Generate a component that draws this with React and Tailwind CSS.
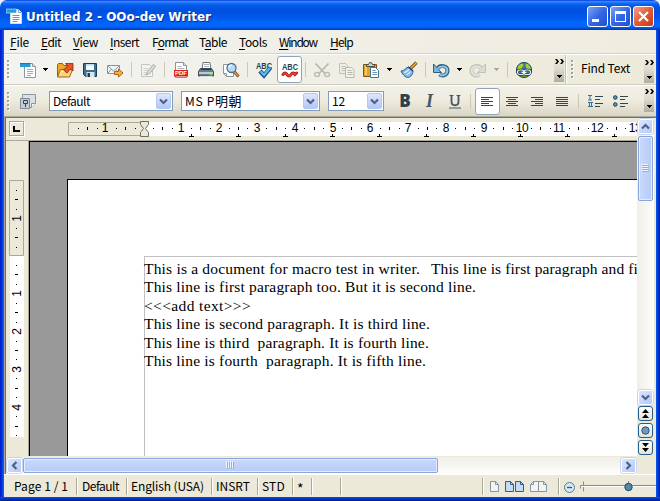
import React, { useLayoutEffect, useRef, useState } from "react";

const UI = "font-['Noto_Sans_CJK_JP','Noto_Sans',sans-serif] font-normal";

/* Text spread to an exact width by adjusting its letter spacing. */
function Fit({ w, className = "", children, text }) {
  const ref = useRef(null);
  const [gap, setGap] = useState(0);
  useLayoutEffect(() => {
    const natural = ref.current.getBoundingClientRect().width;
    setGap((w - natural) / text.length);
  }, []);
  return (
    <span ref={ref} className={`inline-block shrink-0 whitespace-pre ${className}`} style={{ letterSpacing: gap }}>
      {children || text}
    </span>
  );
}

const Icon = ({ children, w = 18, h = 18, className = "" }) => (
  <svg width={w} height={h} viewBox={`0 0 ${w} ${h}`} className={`shrink-0 ${className}`} fill="none">
    {children}
  </svg>
);

const Cell = ({ className, children }) => (
  <div className={`flex h-full shrink-0 items-center justify-center ${className}`}>{children}</div>
);

const Sep = ({ className = "" }) => <div className={`h-[15px] w-px shrink-0 bg-[#cbc8b8] ${className}`} />;

const Caret = ({ dim }) => (
  <Icon w={5} h={3} className="mt-[-1px]">
    <path d="M0 0h5v1H0zM1 1h3v1H1zM2 2h1v1H2z" fill={dim ? "#aaa79b" : "#000"} />
  </Icon>
);

const Grip = () => (
  <div className="flex h-full w-[11px] shrink-0 items-center pl-[3px]">
    <Icon w={3} h={19}>
      {[0, 4, 8, 12, 16].map((y) => (
        <g key={y}>
          <path d={`M1 ${y + 1}h2v2H1z`} fill="#fff" />
          <path d={`M0 ${y}h2v2H0z`} fill="#a5a396" />
        </g>
      ))}
    </Icon>
  </div>
);

const Overflow = () => (
  <div className="flex h-[26px] w-[10px] shrink-0 flex-col items-center justify-between bg-gradient-to-b from-[#efeddf] via-[#dedbcd] to-[#b0ada0] pt-[3px] pb-[4px]">
    <Icon w={9} h={5}>
      <path d="M0 0h2l2 2.500L2 5H0l2-2.500zM5 0h2l2 2.500L7 5H5l2-2.500z" fill="#000" />
    </Icon>
    <Icon w={5} h={3}>
      <path d="M0 0h5v1H0zM1 1h3v1H1zM2 2h1v1H2z" fill="#000" />
    </Icon>
  </div>
);

const DocIcon = () => (
  <Icon>
    <path d="M5.500 2.500h8l3 3v11h-11z" fill="#fff" stroke="#8c979f" />
    <path d="M13.500 2.500v3h3" stroke="#8c979f" fill="#dfe5e8" />
    <path d="M1 2h10.500v4H1z" fill="#2a9ad2" />
    <path d="M1 2h10.500v1H1z" fill="#1577ac" />
    <path d="M8 8.500h6M8 10.500h6M8 12.500h6M8 14.500h4" stroke="#a2abb1" />
  </Icon>
);

const OpenIcon = () => (
  <Icon>
    <path d="M1.500 15.500v-12l1-1h4l1.500 2h4v3" fill="#f1a92c" stroke="#9c5b10" />
    <path d="M1.500 16l3-7.500h12l-3 7.500z" fill="#fdd475" stroke="#a8620f" />
    <path d="M4 14l1.500-4h9" stroke="#fff0b8" />
    <path d="M7.500 9l4-4-2-2.500h7.500v7.500l-2.500-2-3.500 4z" fill="#e4572a" stroke="#8d2210" strokeWidth=".8" />
  </Icon>
);

const SaveIcon = () => (
  <Icon>
    <path d="M2.500 2.500h13v13h-11l-2-2z" fill="#3e6f8f" stroke="#173e58" />
    <path d="M5 3h8v6H5z" fill="#f8fbfc" />
    <path d="M5 3h8v1.500H5z" fill="#bdd9ea" />
    <path d="M5.500 11h8v5h-8z" fill="#d8e5ec" />
    <path d="M6.500 12h2.500v4H6.500z" fill="#1d4055" />
  </Icon>
);

const MailIcon = () => (
  <Icon>
    <path d="M1.500 4.500h12v8h-12z" fill="#f4f7fa" stroke="#8594a0" />
    <path d="M2 5l5.500 5L13 5M2 12l3.500-4M13 12l-3-3.500" stroke="#8594a0" />
    <path d="M8.500 10.500h4v-2.500l4.500 4-4.500 4v-2.500h-4z" fill="#fbb23c" stroke="#a3570d" strokeWidth=".9" />
  </Icon>
);

const EditIcon = () => (
  <Icon>
    <path d="M2.500 3.500h8l3 3v9h-11z" fill="#f2f2ef" stroke="#c4c5c1" />
    <path d="M4.500 7.500h5M4.500 9.500h4M4.500 11.500h3M4.500 13.500h3" stroke="#d0d1cd" />
    <path d="M7 14l1.500-3.500 6-7 2.200 1.800-6 7z" fill="#dcdcd8" stroke="#a9aaa6" />
  </Icon>
);

const PdfIcon = () => (
  <Icon>
    <path d="M3.500 1.500h8l3 3v12h-11z" fill="#fff" stroke="#87949d" />
    <path d="M11.500 1.500v3h3" fill="#dfe5e8" stroke="#87949d" />
    <path d="M5.500 5.500h4M5.500 7.500h7" stroke="#adb6bc" />
    <path d="M2 9h14v6.500H2z" fill="#d9211f" />
    <text x="3" y="14.300" textLength="12" lengthAdjust="spacingAndGlyphs" fontSize="6" fontWeight="700" fontFamily="Liberation Sans" fill="#fff">PDF</text>
  </Icon>
);

const PrintIcon = () => (
  <Icon>
    <path d="M5 8.500l1-7h7l1 7z" fill="#fff" stroke="#697984" />
    <path d="M7 3.500h5M7 5.500h5" stroke="#aab5bd" />
    <path d="M1.500 10.500l2-3h11l2 3v4.500h-15z" fill="#6b7d89" stroke="#3a4c57" />
    <path d="M2 11h14v2H2z" fill="#bfcbd2" />
    <path d="M4 8.500h10" stroke="#2c3b44" />
    <path d="M3 15.500h12" stroke="#d7dfe4" />
    <path d="M12.500 13h3v1.500h-3z" fill="#65d12c" />
  </Icon>
);

const PreviewIcon = () => (
  <Icon>
    <path d="M1.500 3.500h10v12h-7l-3-3z" fill="#fff" stroke="#8b969d" />
    <path d="M1.500 12.500h3v3" stroke="#8b969d" />
    <path d="M12 10.500l4.500 5" stroke="#7d4212" strokeWidth="3" />
    <path d="M12 10.500l4 4.500" stroke="#e8a04c" strokeWidth="1.300" />
    <circle cx="9.500" cy="7" r="4.500" fill="#b7daf1" stroke="#49708d" strokeWidth="1.300" />
    <path d="M7 6.500a2.800 2.800 0 0 1 3-2.300" stroke="#fff" strokeWidth="1.300" />
  </Icon>
);

const SpellIcon = ({ auto }) => (
  <Icon>
    <text x="1" y={auto ? 8.5 : 7.5} textLength="16" lengthAdjust="spacingAndGlyphs" fontSize="8.500" fontWeight="700" fontFamily="Liberation Sans" fill="#263f4e">ABC</text>
    {auto ? (
      <>
        <path d="M2 13.500q2-3 4 0t4 0 4 0l1.500-1.500" stroke="#a51510" strokeWidth="3" strokeLinecap="round" />
        <path d="M2 13.500q2-3 4 0t4 0 4 0l1.500-1.500" stroke="#ef4034" strokeWidth="1.500" strokeLinecap="round" />
      </>
    ) : (
      <>
        <path d="M5 10l4 4.500 6.500-8" stroke="#164d7a" strokeWidth="4.300" />
        <path d="M5.500 10.300L9 14l6-7.300" stroke="#59bdf0" strokeWidth="2.300" />
      </>
    )}
  </Icon>
);

const CutIcon = () => (
  <Icon>
    <path d="M2.500 2.500l9.500 10M15.500 2.500L6 12.500" stroke="#b9b8b0" strokeWidth="1.800" />
    <ellipse cx="4" cy="13.500" rx="2.500" ry="2" stroke="#bdbcb4" strokeWidth="1.400" />
    <ellipse cx="14" cy="13.500" rx="2.500" ry="2" stroke="#bdbcb4" strokeWidth="1.400" />
  </Icon>
);

const CopyIcon = () => (
  <Icon>
    <path d="M1.500 2.500h6l2 2v8h-8z" fill="#eeede6" stroke="#c2c1b9" />
    <path d="M3.500 5.500h4M3.500 7.500h4M3.500 9.500h4" stroke="#c2c1b9" />
    <path d="M7.500 6.500h6l2.500 2.500v7.500H7.500z" fill="#f1f0ea" stroke="#b9b8b0" />
    <path d="M9.500 9.500h4M9.500 11.500h5M9.500 13.500h5" stroke="#b9b8b0" />
  </Icon>
);

const PasteIcon = () => (
  <Icon>
    <path d="M1.500 3.500h13v12h-13z" fill="#e2a52b" stroke="#825511" />
    <path d="M3 5h2v9H3z" fill="#f5c95b" />
    <path d="M4.500 5.500v-2h2l1-1.800h2l1 1.800h2v2z" fill="#ccd1d4" stroke="#4a4a44" />
    <path d="M8.500 6.500h5l3 3v7h-8z" fill="#fff" stroke="#50748e" />
    <path d="M10.500 9.500h3M10.500 11.500h4.500M10.500 13.500h4.500" stroke="#6d95b3" />
  </Icon>
);

const BrushIcon = () => (
  <Icon>
    <path d="M10.500 7.500l6-6" stroke="#7e4f12" strokeWidth="3.200" />
    <path d="M10.500 7.500l6-6" stroke="#eab14c" strokeWidth="1.500" />
    <path d="M1 10c3 .5 4-3 7.500-4L13 10c0 4-3 6.500-5.500 6.500C4 15.500 2.500 13 1 10z" fill="#7fb9e8" stroke="#265d95" />
    <path d="M4 11.500c2 0 3-1.500 5-3M6.500 14c1.500-.5 3-2 4-3.500" stroke="#e2f2fd" strokeWidth="1.200" />
    <path d="M8.500 6l4.500 4" stroke="#204468" strokeWidth="1.500" />
  </Icon>
);

const UndoIcon = () => (
  <Icon>
    <path d="M5.500 7.500C8 3.500 15.500 4.500 15.500 9.500S10 15.500 7.500 13.500" stroke="#285e88" strokeWidth="4" />
    <path d="M1.500 3v8.500h8L6.500 8.500 4.500 6z" fill="#7eb4da" stroke="#285e88" />
    <path d="M5.500 7.800C8 4 15.300 5 15.300 9.500S10 15.300 7.700 13.600" stroke="#8fc4e5" strokeWidth="2" />
  </Icon>
);

const RedoIcon = () => (
  <Icon>
    <path d="M12.500 7.500C10 3.500 2.500 4.500 2.500 9.500S8 15.500 10.500 13.500" stroke="#c3c2ba" strokeWidth="4" />
    <path d="M16.500 3v8.500h-8l3-3 2-2.500z" fill="#dddcd3" stroke="#c3c2ba" />
    <path d="M12.500 7.800C10 4 2.700 5 2.700 9.500S8 15.300 10.300 13.600" stroke="#e5e4dc" strokeWidth="2" />
  </Icon>
);

const GlobeIcon = () => (
  <Icon>
    <circle cx="9" cy="9" r="7.600" fill="#3876a6" stroke="#254a63" />
    <path d="M2.500 7C4 2 8 2 8.500 3.500S7 6 6 9l-3 1zM10.500 2.500c3 0 5 3 5.500 6l-2.500 1-2.500-3z" fill="#a9cf38" />
    <path d="M4 13h10l-2.500 3h-5z" fill="#65962b" />
    <rect x="2.500" y="9" width="6.500" height="4.500" rx="2.200" stroke="#293840" strokeWidth="2.400" />
    <rect x="9" y="9" width="6.500" height="4.500" rx="2.200" stroke="#293840" strokeWidth="2.400" />
    <rect x="2.500" y="9" width="6.500" height="4.500" rx="2.200" stroke="#e7ecee" strokeWidth="1.200" />
    <rect x="9" y="9" width="6.500" height="4.500" rx="2.200" stroke="#e7ecee" strokeWidth="1.200" />
    <path d="M6.500 11.300h5" stroke="#fff" strokeWidth="1.200" />
  </Icon>
);

const StylesIcon = () => (
  <Icon>
    <path d="M3.500 2.500h13v9l-4 4h-9z" fill="#dbe2e7" stroke="#8797a2" />
    <path d="M16.500 11.500h-4v4" fill="#fff" stroke="#8797a2" />
    <path d="M1.500 6.500h9v10h-9z" fill="#c3ccd3" stroke="#7c8b96" />
    <path d="M4.500 8.500h4v3h-4zM6.500 11.500v3.500" stroke="#33434d" />
  </Icon>
);

const Lines = ({ rows }) => (
  <Icon w={13} h={9}>
    {rows.map(([x, w], i) => (
      <path key={i} d={`M${x} ${i * 2 + 0.5}h${w}`} stroke="#33454f" />
    ))}
  </Icon>
);

const alignRows = {
  left: [[0, 12], [0, 8], [0, 12], [0, 8], [0, 12]],
  center: [[0, 12], [2, 8], [0, 12], [2, 8], [0, 12]],
  right: [[0, 12], [4, 8], [0, 12], [4, 8], [0, 12]],
  full: [[0, 12], [0, 12], [0, 12], [0, 12], [0, 12]],
};

const NumberingIcon = () => (
  <Icon w={15} h={12}>
    <path d="M0 .5h4M2 0v5M0 5h4M0 7.500h5M1.500 7v5M3.500 7v5M0 11.500h5" stroke="#386f96" />
    <path d="M7 1.500h8M7 4.500h5M7 8.500h8M7 11.500h5" stroke="#33454f" />
  </Icon>
);

const BulletsIcon = () => (
  <Icon w={15} h={12}>
    <circle cx="2.300" cy="2.500" r="1.800" fill="#4c95c4" stroke="#1b4058" />
    <circle cx="2.300" cy="9.500" r="1.800" fill="#4c95c4" stroke="#1b4058" />
    <path d="M7 1.500h8M7 4.500h5M7 8.500h8M7 11.500h5" stroke="#33454f" />
  </Icon>
);

const Chevron = ({ dir }) => {
  const turn = { down: 0, left: 90, up: 180, right: 270 }[dir];
  return (
    <Icon w={9} h={9}>
      <path d="M1 2.500l3.500 3.500 3.500-3.500" stroke="#4d6185" strokeWidth="2.200" transform={`rotate(${turn} 4.5 4.5)`} />
    </Icon>
  );
};

const Combo = ({ className, children }) => (
  <div className={`flex h-5 shrink-0 items-center justify-between border border-[#7f9db9] bg-white pr-px pl-[3px] ${className}`}>
    {children}
    <div className="flex h-4 w-[15px] items-center justify-center rounded-[2px] border border-[#b5c8f4] bg-gradient-to-b from-[#dde7fe] to-[#b4c8f6]">
      <Chevron dir="down" />
    </div>
  </div>
);

const menus = [
  ["F", "ile", 19, "w-[31px]"],
  ["E", "dit", 20, "w-[32px]"],
  ["V", "iew", 25, "w-[37px]"],
  ["I", "nsert", 29, "w-[42px]"],
  ["F", "ormat", 36, "w-[47px]", "o"],
  ["T", "able", 28, "w-[40px]", "a"],
  ["T", "ools", 28, "w-[40px]"],
  ["W", "indow", 38, "w-[51px]"],
  ["H", "elp", 23, "w-[40px]"],
];

function MenuBar() {
  return (
    <div className="flex h-6 items-center border-b border-[#d6d3c4] bg-gradient-to-r from-[#f2f2ee] to-[#efecdf] pl-[6px] text-[12px] leading-[23px]">
      {menus.map(([a, b, w, cls, key]) => (
        <div key={a + b} className={`-mt-px shrink-0 ${cls}`}>
          <Fit w={w} text={a + b}>
            {key ? (
              <>{a}<u className="underline-offset-2">{key}</u>{b.slice(1)}</>
            ) : (
              <><u className="underline-offset-2">{a}</u>{b}</>
            )}
          </Fit>
        </div>
      ))}
    </div>
  );
}

const toolbarBg = "bg-gradient-to-r from-[#f3f3f0] to-[#edead9]";

function StandardBar() {
  return (
    <div className={`flex h-[31px] items-center border-t border-b border-t-white border-b-[#cfccbd] ${toolbarBg}`}>
      <Grip />
      <Cell className="w-[26px]"><DocIcon /></Cell>
      <Cell className="w-2"><Caret /></Cell>
      <Cell className="w-8"><OpenIcon /></Cell>
      <Cell className="w-[18px]"><SaveIcon /></Cell>
      <Cell className="w-8"><MailIcon /></Cell>
      <Sep />
      <Cell className="w-8"><EditIcon /></Cell>
      <Sep />
      <Cell className="w-8"><PdfIcon /></Cell>
      <Cell className="w-[18px]"><PrintIcon /></Cell>
      <Cell className="w-8"><PreviewIcon /></Cell>
      <Sep />
      <Cell className="ml-[3px] w-[26px]"><SpellIcon /></Cell>
      <div className="flex h-[27px] w-[25px] shrink-0 items-center justify-center rounded-[3px] border border-[#8fa5bb] bg-white">
        <SpellIcon auto />
      </div>
      <Sep className="ml-[3px]" />
      <Cell className="w-8"><CutIcon /></Cell>
      <Cell className="w-[18px]"><CopyIcon /></Cell>
      <Cell className="w-[30px]"><PasteIcon /></Cell>
      <Cell className="w-[6px]"><Caret /></Cell>
      <Cell className="w-[33px]"><BrushIcon /></Cell>
      <Sep />
      <Cell className="w-[30px]"><UndoIcon /></Cell>
      <Cell className="w-[6px]"><Caret /></Cell>
      <Cell className="w-8"><RedoIcon /></Cell>
      <Cell className="w-[5px]"><Caret dim /></Cell>
      <Sep className="ml-2" />
      <Cell className="w-8"><GlobeIcon /></Cell>
      <div className="flex-1" />
      <div className="-mt-px"><Overflow /></div>
      <div className="ml-px h-full w-px bg-[#c5c2b3]" />
      <div className="h-full w-px bg-white" />
      <div className="flex h-full w-[89px] shrink-0 items-center">
        <div className="w-[14px] pl-px"><Grip /></div>
        <Fit w={49} text="Find Text" className="-mt-[3px] text-[12px] leading-4" />
        <div className="flex-1" />
        <Overflow />
        <div className="w-[2px]" />
      </div>
    </div>
  );
}

function FormatBar() {
  return (
    <div className="flex h-[31px] items-center border-t border-t-white bg-gradient-to-b from-[#f2f1ea] via-[#eeebdd] to-[#d9d6c5]">
      <Grip />
      <Cell className="w-[26px]"><StylesIcon /></Cell>
      <Combo className="ml-2 w-[124px]"><Fit w={37} text="Default" className="-mt-px text-[12px] leading-[18px]" /></Combo>
      <Combo className="ml-2 w-[139px]">
        <span className="-mt-px flex text-[12px] leading-[18px]">
          <Fit w={30} text="MS P" />
          <Fit w={27} text="明朝" className="text-[13px]" />
        </span>
      </Combo>
      <Combo className="ml-2 w-14"><Fit w={13} text="12" className="-mt-px text-[12px] leading-[18px]" /></Combo>
      <Cell className="ml-2 w-[26px] font-['Open_Sans',sans-serif] text-[17px] font-extrabold text-[#2c414e]">B</Cell>
      <Cell className="w-[23px] font-['Liberation_Serif',serif] text-[18px] font-bold text-[#435866] italic">I</Cell>
      <Cell className="w-7">
        <Icon w={12} h={15}>
          <path d="M2.500 1v6.500c0 5 7 5 7 0V1" stroke="#435866" strokeWidth="1.800" />
          <path d="M.5 1.500h4M7.500 1.500h4" stroke="#435866" />
          <path d="M0 14h12" stroke="#435866" />
        </Icon>
      </Cell>
      <Sep className="ml-px" />
      <div className="ml-1 flex h-[27px] w-[25px] shrink-0 items-center justify-center rounded-[3px] border border-[#8fa5bb] bg-white">
        <Lines rows={alignRows.left} />
      </div>
      <Cell className="w-6"><Lines rows={alignRows.center} /></Cell>
      <Cell className="w-[26px]"><Lines rows={alignRows.right} /></Cell>
      <Cell className="w-6"><Lines rows={alignRows.full} /></Cell>
      <Sep className="ml-1" />
      <Cell className="w-[33px]"><NumberingIcon /></Cell>
      <Cell className="w-4"><BulletsIcon /></Cell>
      <div className="flex-1" />
      <div className="-mt-1"><Overflow /></div>
      <div className="w-[2px] shrink-0" />
    </div>
  );
}

const CM = 37.8;
const marks = Array.from({ length: 52 }, (_, i) => i + 1);
const scaleText = "font-['Liberation_Sans',sans-serif] text-[12px] font-normal";

/* Horizontal scale; the page's text edge lies at x = 76. */
function TopRuler() {
  return (
    <svg width="569" height="20" viewBox="0 0 569 20" className={`mt-[3px] block ${scaleText}`} fill="none">
      <path d="M.5 1.500h76v13H.5z" fill="#ece9d8" stroke="#aca899" />
      <path d="M77 1h492v14H77z" fill="#fff" />
      {marks.map((i) => {
        const x = Math.round(75.5 + (CM * i) / 4);
        if (i % 4 === 0)
          return (
            <text key={i} x={x} y="11" textAnchor="middle" fill="#000" letterSpacing="-.3">{i / 4}</text>
          );
        return <path key={i} d={i % 2 ? `M${x} 7h1v1h-1z` : `M${x} 6h1v3h-1z`} fill="#000" />;
      })}
      {[10, 29, 48, 67].map((x) => <path key={x} d={`M${x} 7h1v1h-1z`} fill="#000" />)}
      <path d="M19 6h1v3h-1zM57 6h1v3h-1z" fill="#000" />
      <text x="37" y="11" textAnchor="middle" fill="#000">1</text>
      {Array.from({ length: 10 }, (_, i) => Math.round(123 + 47 * i)).map((x) => (
        <path key={x} d={`M${x - 2} 15h5v1h-5zM${x} 13h1v2h-1z`} fill="#000" />
      ))}
      <path d="M72.500 .5h8v3l-3 4 3 4v4h-8v-4l3-4-3-4z" fill="#ece9d8" stroke="#716f64" />
    </svg>
  );
}

function SideRuler() {
  const label = (y, n) => (
    <text key={n + "-" + y} transform={`translate(11.5 ${y}) rotate(-90)`} textAnchor="middle" fill="#000">{n}</text>
  );
  return (
    <svg width="15" height="258" viewBox="0 0 15 258" className={`mt-[39px] ml-[3px] block ${scaleText}`} fill="none">
      <path d="M1 76h14v181H1z" fill="#fff" />
      <path d="M.5 .5h14v75H.5z" fill="#ece9d8" stroke="#aca899" />
      {[10, 29, 48, 67].map((y) => <path key={y} d={`M7 ${y}h1v1H7z`} fill="#000" />)}
      <path d="M6 19h3v1H6zM6 57h3v1H6z" fill="#000" />
      {label(38.5, 1)}
      {Array.from({ length: 19 }, (_, k) => k + 1).map((i) => {
        const y = Math.round(75.5 + (CM * i) / 4);
        if (i % 4 === 0) return label(y + 0.5, i / 4);
        return <path key={i} d={i % 2 ? `M7 ${y}h1v1H7z` : `M6 ${y}h3v1H6z`} fill="#000" />;
      })}
    </svg>
  );
}

const para = "font-['Liberation_Serif',serif] text-[15.5px] font-normal leading-[18.4px]";

const lines = [
  [[276, "This is a document for macro test in writer."], [207, "This line is first paragraph and fi"]],
  [[332, "This line is first paragraph too. But it is second line."]],
  [[107, "<<<add text>>>"]],
  [[286, "This line is second paragraph. It is third line."]],
  [[285, "This line is third  paragraph. It is fourth line."]],
  [[282, "This line is fourth  paragraph. It is fifth line."]],
];

function DocumentView() {
  return (
    <div className="h-full w-[609px] border-l border-[#aca899]">
      <div className="h-full overflow-hidden border-t border-l border-black bg-[#999999] pt-[37px] pl-[37px]">
        <div className="h-full w-[800px] border-t border-l border-black bg-white pt-[76px] pl-[76px]">
          <div className="h-full border-t border-l border-[#c0c0c0] pt-[3px]">
            {lines.map((runs, i) => (
              <div key={i} className={`-ml-px flex gap-[11px] ${para}`}>
                {runs.map(([w, t]) => <Fit key={t} w={w} text={t} />)}
              </div>
            ))}
          </div>
        </div>
      </div>
    </div>
  );
}

const scrollBtn = "flex shrink-0 items-center justify-center rounded-[2px] border border-white bg-gradient-to-br from-[#dce6fe] to-[#b4c9f8] shadow-[0_0_0_.5px_#9db5e8]";
const navBtn = "flex h-[15px] w-[15px] shrink-0 items-center justify-center rounded-[3px] border border-[#235f8d] bg-gradient-to-b from-white to-[#e4e2d6]";

function VerticalScroll() {
  return (
    <div className="flex h-full w-[19px] flex-col bg-[#ece9d8]">
      <div className="flex h-[287px] w-[17px] flex-col items-center bg-gradient-to-r from-[#efeee7] to-[#fefefb] pt-px">
        <div className={`h-[15px] w-[15px] ${scrollBtn}`}><Chevron dir="up" /></div>
        <div className="mt-[2px] flex h-[65px] w-[15px] flex-col items-center justify-center gap-px rounded-[2px] border border-[#88a5dc] bg-gradient-to-r from-[#cad9fd] to-[#b7cbf9] shadow-[inset_0_0_0_1px_#e5edff]">
          {[0, 1, 2, 3].map((k) => <div key={k} className="h-px w-[7px] bg-[#8cb0f8] shadow-[-1px_-1px_0_#eef4fe]" />)}
        </div>
        <div className="flex-1" />
        <div className={`h-[15px] w-[15px] ${scrollBtn}`}><Chevron dir="down" /></div>
      </div>
      <div className="flex flex-col gap-[2px] pt-px pl-px">
        <div className={navBtn}>
          <Icon w={7} h={9}><path d="M3.500 0L7 4H0zM3.500 5L7 9H0z" fill="#000" /></Icon>
        </div>
        <div className={navBtn}>
          <Icon w={9} h={9}><circle cx="4.500" cy="4.500" r="3.700" fill="#6a9bc0" stroke="#2c526d" /></Icon>
        </div>
        <div className={navBtn}>
          <Icon w={7} h={9}><path d="M0 0h7L3.500 4zM0 5h7L3.500 9z" fill="#000" /></Icon>
        </div>
      </div>
    </div>
  );
}

function HorizontalScroll() {
  return (
    <div className="flex h-[18px] w-full items-center border-t border-[#ece9d8] bg-gradient-to-b from-[#efeee7] to-[#fefefb] pl-px">
      <div className={`h-[15px] w-[15px] ${scrollBtn}`}><Chevron dir="left" /></div>
      <div className="ml-px flex h-[15px] w-[415px] items-center justify-center gap-px rounded-[2px] border border-[#88a5dc] bg-gradient-to-b from-[#cad9fd] to-[#b7cbf9] shadow-[inset_0_0_0_1px_#e5edff]">
        {[0, 1, 2, 3].map((k) => <div key={k} className="h-[7px] w-px bg-[#8cb0f8] shadow-[-1px_-1px_0_#eef4fe]" />)}
      </div>
      <div className="flex-1" />
      <div className={`mr-px h-[15px] w-[15px] ${scrollBtn}`}><Chevron dir="right" /></div>
    </div>
  );
}

const StatusCell = ({ className, children }) => (
  <div className={`flex h-[17px] shrink-0 items-center border-r border-[#aca899] shadow-[1px_0_0_#fff] ${className}`}>{children}</div>
);

const PageGlyph = ({ x = 0, on }) => (
  <>
    <path d={`M${x + 0.5} .5h5l3 3v7h-8z`} fill={on ? "#c5ddf3" : "#f3f3ef"} stroke={on ? "#245f99" : "#8295a5"} />
    <path d={`M${x + 5.5} .5v3h3`} stroke={on ? "#245f99" : "#8295a5"} />
  </>
);

function StatusBar() {
  return (
    <div className="flex h-[23px] items-center border-t border-white bg-[#ece9d8] pt-px text-[12px] leading-4">
      <StatusCell className="w-[73px] pl-[10px]"><Fit w={54} text="Page 1 / 1" className="-mt-px" /></StatusCell>
      <StatusCell className="w-[50px] pl-[5px]"><Fit w={37} text="Default" className="-mt-px" /></StatusCell>
      <StatusCell className="w-[85px] pl-1"><Fit w={73} text="English (USA)" className="-mt-px" /></StatusCell>
      <StatusCell className="w-[46px] pl-1"><Fit w={34} text="INSRT" className="-mt-px" /></StatusCell>
      <StatusCell className="w-[35px] pl-1"><Fit w={23} text="STD" className="-mt-px" /></StatusCell>
      <StatusCell className="w-[19px] pl-1"><span className="pt-[3px] text-[14px]">*</span></StatusCell>
      <StatusCell className="w-[29px]" />
      <StatusCell className="w-[142px]" />
      <StatusCell className="w-[76px] gap-[6px] pl-[7px]">
        <Icon w={9} h={11}><PageGlyph /></Icon>
        <Icon w={19} h={11}><PageGlyph on /><PageGlyph x={10} on /></Icon>
        <Icon w={17} h={11}>
          <path d="M.5 10.500v-7l3-3h5v10zM8.500 .5h5l3 3v7h-8z" fill="#f3f3ef" stroke="#8295a5" />
          <path d="M3.500 .5v3h-3M13.500 .5v3h3" stroke="#8295a5" />
        </Icon>
      </StatusCell>
      <Icon w={97} h={16}>
        <circle cx="10.500" cy="8.500" r="5" fill="#d5e6f2" stroke="#547d9d" />
        <path d="M8 8.500h5" stroke="#245f8d" strokeWidth="1.300" />
        <path d="M21.500 9.500v-3h76M24.500 2.500v10M69.500 2v10" stroke="#8d8b7f" />
        <path d="M22 7.500h75" stroke="#fff" />
        <circle cx="69.500" cy="8" r="3.700" fill="#5189af" stroke="#24475e" />
      </Icon>
    </div>
  );
}

const winBtn = "flex h-[21px] w-[21px] items-center justify-center rounded-[3px] border border-white";

function TitleBar() {
  return (
    <div className="flex h-[30px] shrink-0 items-center rounded-t-[7px] bg-[linear-gradient(180deg,#0831d9_0%,#2f8bff_5%,#1370f5_10%,#0459e8_18%,#0050e0_35%,#0055e8_55%,#0064fb_75%,#0068ff_88%,#0148d0_96%,#0038bd_100%)] pr-[6px] pl-[6px]">
      <Icon w={17} h={18} className="mt-[2px]">
        <path d="M4.500 2.500h8l3 3v11h-11z" fill="#fff" stroke="#cbdceb" />
        <path d="M12.500 2.500v3h3" stroke="#8ba3b9" />
        <path d="M0 2h10.500v4H0z" fill="#2a9ad2" stroke="#d0eefb" strokeWidth=".6" />
        <path d="M6.500 8.500h7M6.500 10.500h7M6.500 12.500h7M6.500 14.500h5" stroke="#7f9199" />
      </Icon>
      <Fit
        w={185}
        text="Untitled 2 - OOo-dev Writer"
        className="mt-[3px] ml-[3px] font-['DejaVu_Sans','Noto_Sans',sans-serif] text-[12px] leading-4 font-bold text-white [text-shadow:1px_1px_0_#0a2a8a]"
      />
      <div className="mt-[2px] ml-auto flex gap-[2px]">
        <div className={`${winBtn} bg-gradient-to-br from-[#7aa2f5] via-[#3567e4] to-[#1d4fd0]`}>
          <div className="mt-[9px] mr-[5px] h-[3px] w-[7px] bg-white" />
        </div>
        <div className={`${winBtn} bg-gradient-to-br from-[#7aa2f5] via-[#3567e4] to-[#1d4fd0]`}>
          <div className="h-[11px] w-[11px] border border-t-[3px] border-white" />
        </div>
        <div className={`${winBtn} bg-gradient-to-br from-[#f0a08a] via-[#e35934] to-[#c9361a]`}>
          <Icon w={11} h={11}><path d="M1 1l9 9M10 1l-9 9" stroke="#fff" strokeWidth="2.200" /></Icon>
        </div>
      </div>
    </div>
  );
}

export default function App() {
  return (
    <div className={`flex h-[501px] w-[660px] flex-col overflow-hidden bg-[#e8eef8] text-black ${UI}`}>
      <TitleBar />
      <div className="flex h-[467px]">
        <div className="w-1 shrink-0 bg-gradient-to-r from-[#0019cf] via-[#0831d9] to-[#166aee]" />
        <div className="flex w-[652px] flex-col bg-[#ece9d8]">
          <MenuBar />
          <StandardBar />
          <FormatBar />
          <div className="flex h-[358px] shrink-0 border-t border-l border-[#aca899]">
            <div className="flex border-t border-l border-[#716f64]">
              <div className="w-[631px]">
                <div className="flex h-[23px] border-b border-[#aca899] pl-[3px]">
                  <div className="mt-[3px] flex h-[15px] w-[15px] items-center justify-center border border-[#aca899] shadow-[1px_1px_0_#fff,inset_1px_1px_0_#fff]">
                    <div className="h-[6px] w-[7px] border-b-2 border-l-2 border-black" />
                  </div>
                  <div className="ml-[44px] h-5 w-[569px]"><TopRuler /></div>
                </div>
                <div className="flex h-[315px]">
                  <div className="w-[22px] shrink-0"><SideRuler /></div>
                  <DocumentView />
                </div>
                <HorizontalScroll />
              </div>
              <VerticalScroll />
            </div>
          </div>
          <StatusBar />
        </div>
        <div className="w-1 shrink-0 bg-gradient-to-r from-[#0a5bee] via-[#0038d8] to-[#001a9c]" />
      </div>
      <div className="h-1 shrink-0 bg-gradient-to-b from-[#0a4ff0] to-[#001590]" />
    </div>
  );
}
